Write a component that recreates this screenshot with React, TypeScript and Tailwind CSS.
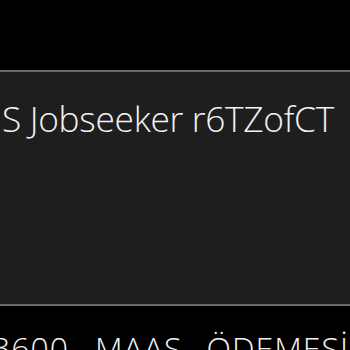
export default function App() {
  return (
    <div className="w-[350px] h-[350px] overflow-hidden bg-black" style={{ fontFamily: '"Open Sans", "Noto Sans", sans-serif' }}>
      <div className="h-[70px]" />
      <div className="h-[236px] border-y-2 border-[#6a6a6a] bg-[#1e1e1e]">
        <div className="pt-[26px] pl-[2px] text-[35.3px] font-light leading-[40px] tracking-[-0.3px] text-[#f2f2f2] whitespace-nowrap">
          S Jobseeker r6TZofCT
        </div>
      </div>
      <div className="mt-[22px] -ml-[8px] whitespace-nowrap text-[32px] font-light leading-[40px] tracking-[1px] text-[#f2f2f2] [word-spacing:-2px]">
        3600 - MAAŞ<span className="ml-[24px]">ÖDEMESİ</span>
      </div>
    </div>
  );
}
